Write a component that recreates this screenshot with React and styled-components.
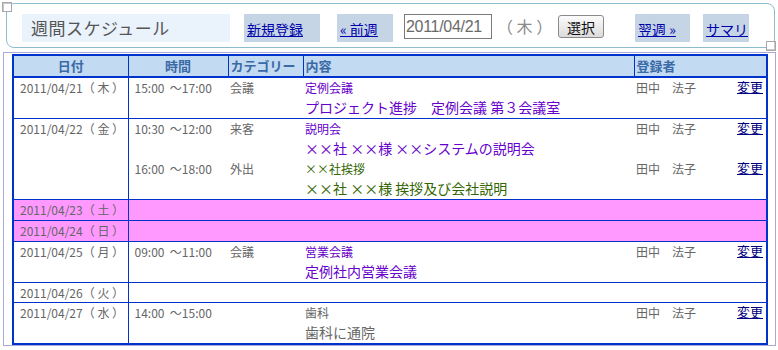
import React from "react";
import styled, { createGlobalStyle } from "styled-components";

const GlobalStyle = createGlobalStyle`
  body {
    margin: 0;
    background: #ffffff;
    font-family: "Noto Sans CJK JP", "Noto Sans", sans-serif;
  }
`;

const schedule = [
  {
    date: "2011/04/21（ 木 ）",
    entries: [
      {
        time: "15:00 \u00a0～17:00",
        category: "会議",
        title: "定例会議",
        desc: "プロジェクト進捗　定例会議 第３会議室",
        tone: "purple",
      },
    ],
  },
  {
    date: "2011/04/22（ 金 ）",
    entries: [
      {
        time: "10:30 \u00a0～12:00",
        category: "来客",
        title: "説明会",
        desc: "××社 ××様 ××システムの説明会",
        tone: "purple",
      },
      {
        time: "16:00 \u00a0～18:00",
        category: "外出",
        title: "××社挨拶",
        desc: "××社 ××様 挨拶及び会社説明",
        tone: "green",
      },
    ],
  },
  { date: "2011/04/23（ 土 ）", holiday: true, entries: [] },
  { date: "2011/04/24（ 日 ）", holiday: true, entries: [] },
  {
    date: "2011/04/25（ 月 ）",
    entries: [
      {
        time: "09:00 \u00a0～11:00",
        category: "会議",
        title: "営業会議",
        desc: "定例社内営業会議",
        tone: "purple",
      },
    ],
  },
  { date: "2011/04/26（ 火 ）", entries: [] },
  {
    date: "2011/04/27（ 水 ）",
    entries: [
      {
        time: "14:00 \u00a0～15:00",
        category: "",
        title: "歯科",
        desc: "歯科に通院",
        tone: "gray",
      },
    ],
  },
];

const tones = {
  purple: "#6600cc",
  green: "#336600",
  gray: "#666666",
};

export default function App() {
  return (
    <>
      <GlobalStyle />
      <Panel>
        <Grip $corner="tl" />
        <PageTitle>週間スケジュール</PageTitle>
        <NavBox $ml={14} $w={76}>
          <NavLink href="#">新規登録</NavLink>
        </NavBox>
        <NavBox $ml={17} $w={56}>
          <NavLink href="#">«&nbsp;前週</NavLink>
        </NavBox>
        <DateInput defaultValue="2011/04/21" />
        <DayLabel>（ 木 ）</DayLabel>
        <SelectButton>選択</SelectButton>
        <NavBox $ml={31} $w={55}>
          <NavLink href="#">翌週&nbsp;»</NavLink>
        </NavBox>
        <NavBox $ml={13} $w={46}>
          <NavLink href="#">サマリ</NavLink>
        </NavBox>
        <Grip $corner="br" />
      </Panel>

      <Frame>
        <Table>
          <colgroup>
            <col style={{ width: 115 }} />
            <col style={{ width: 100 }} />
            <col style={{ width: 75 }} />
            <col style={{ width: 331 }} />
            <col style={{ width: 100 }} />
            <col style={{ width: 33 }} />
          </colgroup>
          <thead>
            <tr>
              <HeadCell $center>日付</HeadCell>
              <HeadCell $center>時間</HeadCell>
              <HeadCell>カテゴリー</HeadCell>
              <HeadCell>内容</HeadCell>
              <HeadCell colSpan={2}>登録者</HeadCell>
            </tr>
          </thead>
          <tbody>
            {schedule.map((day) => {
              if (day.entries.length === 0) {
                return (
                  <Row key={day.date} $holiday={day.holiday} $last>
                    <DateCell $holiday={day.holiday}>{day.date}</DateCell>
                    <td colSpan={5} />
                  </Row>
                );
              }
              return day.entries.map((e, i) => (
                <Row key={day.date + i} $last={i === day.entries.length - 1}>
                  {i === 0 && (
                    <DateCell rowSpan={day.entries.length}>{day.date}</DateCell>
                  )}
                  <TimeCell>{e.time}</TimeCell>
                  <Cell>{e.category}</Cell>
                  <Cell>
                    <EntryTitle $tone={e.tone}>{e.title}</EntryTitle>
                    <EntryDesc $tone={e.tone}>{e.desc}</EntryDesc>
                  </Cell>
                  <Cell>田中　法子</Cell>
                  <EditCell>
                    <EditLink href="#">変更</EditLink>
                  </EditCell>
                </Row>
              ));
            })}
          </tbody>
        </Table>
      </Frame>
    </>
  );
}

const Panel = styled.div`
  position: relative;
  box-sizing: border-box;
  margin: 3px 3px 0 6px;
  height: 45px;
  border: 1px solid #8dbdcd;
  border-radius: 8px;
  padding: 10px 0 0 15px;
  display: flex;
  align-items: flex-start;
`;

const Grip = styled.span`
  position: absolute;
  width: 8px;
  height: 8px;
  border: 1px solid #a8a8a8;
  background: #ffffff;
  ${(p) =>
    p.$corner === "tl"
      ? "left: -5px; top: -2px; box-shadow: inset 2px 2px 0 -1px #c8c8c8;"
      : "right: -2px; bottom: -4px; box-shadow: inset -2px -2px 0 -1px #c8c8c8;"}
`;

const PageTitle = styled.div`
  width: 208px;
  height: 28px;
  box-sizing: border-box;
  padding-left: 9px;
  background: #eaf2fc;
  color: #555555;
  font-size: 17px;
  line-height: 28px;
  letter-spacing: 0.5px;
`;

const NavBox = styled.div`
  margin-left: ${(p) => p.$ml}px;
  width: ${(p) => p.$w}px;
  height: 28px;
  box-sizing: border-box;
  padding-left: 3px;
  background: #c5d5e5;
  line-height: 28px;
  white-space: nowrap;
`;

const NavLink = styled.a`
  color: #0000aa;
  font-size: 14px;
  text-decoration: underline;
`;

const DateInput = styled.input`
  margin-left: 11px;
  width: 88px;
  height: 25px;
  box-sizing: border-box;
  border: 1px solid #7a7a7a;
  padding: 0 1px;
  color: #6a6a6a;
  font-family: "Liberation Sans", Arial, sans-serif;
  font-size: 16px;
  letter-spacing: -0.3px;
  outline: none;
`;

const DayLabel = styled.span`
  margin-left: 5px;
  width: 53px;
  color: #8a8a8a;
  font-size: 16px;
  line-height: 25px;
  white-space: nowrap;
`;

const SelectButton = styled.button`
  margin: 1px 0 0 8px;
  width: 46px;
  height: 23px;
  padding: 0;
  border: 1px solid #8a8a8a;
  border-radius: 3px;
  background: linear-gradient(#fbfbfb, #dcdcdc);
  color: #111111;
  font-family: "Noto Sans CJK JP", sans-serif;
  font-size: 14px;
`;

const Frame = styled.div`
  margin: 4px 2px 0 3px;
  border: 1px solid #a9a9d9;
  padding: 1px 7px 0 8px;
`;

const Table = styled.table`
  width: 754px;
  table-layout: fixed;
  border-collapse: collapse;
  border: 2px solid #0033cc;
  font-size: 12px;
  color: #666666;
`;

const HeadCell = styled.th`
  height: 20px;
  padding: 0 2px;
  background: #c2daf2;
  border: 1px solid #0033cc;
  border-bottom: 2px solid #0033cc;
  color: #3a6aa6;
  font-size: 13px;
  line-height: 18px;
  font-weight: bold;
  text-align: ${(p) => (p.$center ? "center" : "left")};
  white-space: nowrap;
`;

const Row = styled.tr`
  background: ${(p) => (p.$holiday ? "#ff99ff" : "#ffffff")};
  border-bottom: ${(p) => (p.$last ? "1px solid #0033cc" : "none")};
`;

const Cell = styled.td`
  padding: 0 2px;
  vertical-align: top;
  line-height: 19px;
  white-space: nowrap;
`;

const DateCell = styled(Cell)`
  padding-left: 6px;
  height: ${(p) => (p.$holiday ? 20 : 19)}px;
  line-height: ${(p) => (p.$holiday ? 20 : 19)}px;
  border-right: 1px solid #0033cc;
`;

const TimeCell = styled(Cell)`
  padding-left: 6px;
`;

const EditCell = styled(Cell)`
  padding-right: 3px;
  text-align: right;
  line-height: 18px;
`;

const EditLink = styled.a`
  color: #000080;
  font-size: 13px;
  line-height: 18px;
  text-decoration: underline;
`;

const EntryTitle = styled.div`
  color: ${(p) => tones[p.$tone]};
  font-size: 12px;
  line-height: 19px;
`;

const EntryDesc = styled.div`
  color: ${(p) => tones[p.$tone]};
  font-size: 14px;
  line-height: 21px;
`;
